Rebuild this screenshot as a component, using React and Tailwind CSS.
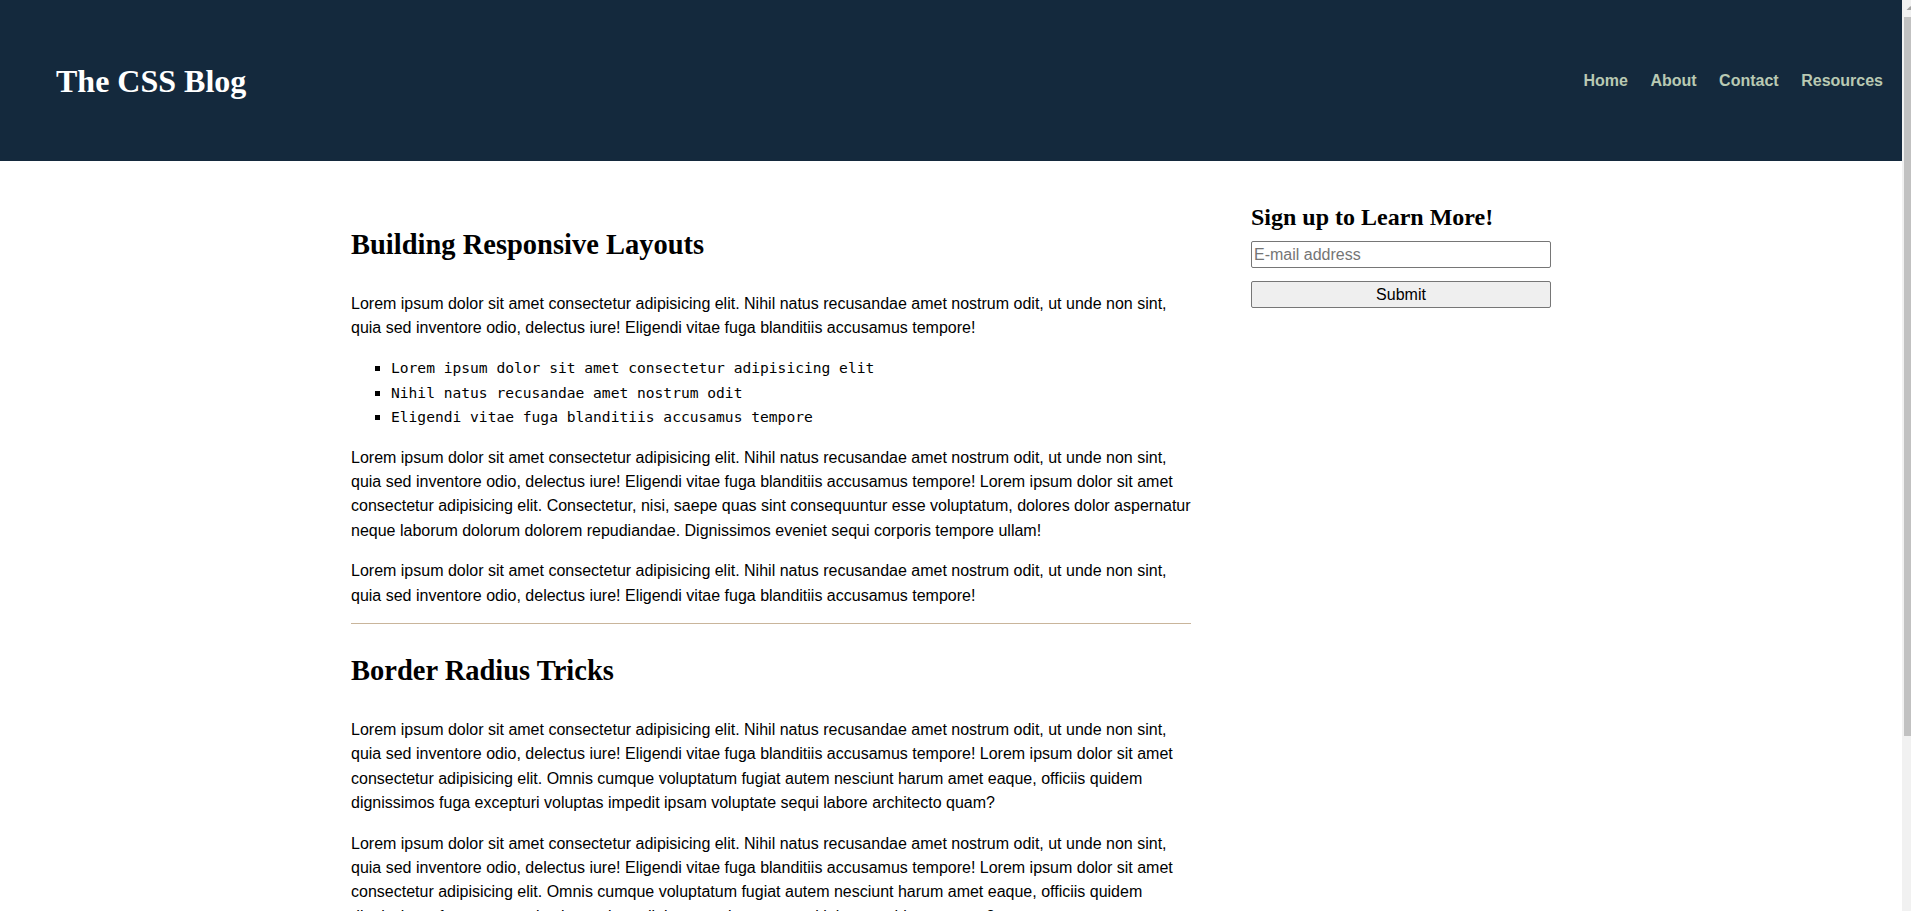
const navLinks = ["Home", "About", "Contact", "Resources"];

const lorem =
    "Lorem ipsum dolor sit amet consectetur adipisicing elit. Nihil natus recusandae amet nostrum odit, ut unde non sint, quia sed inventore odio, delectus iure! Eligendi vitae fuga blanditiis accusamus tempore!";

const listItems = [
    "Lorem ipsum dolor sit amet consectetur adipisicing elit",
    "Nihil natus recusandae amet nostrum odit",
    "Eligendi vitae fuga blanditiis accusamus tempore",
];

const Paragraph = ({ children }) => (
    <p className="my-[12.5px] pt-[3.5px] text-[16px] leading-[24.4px] text-black">{children}</p>
);

const PostTitle = ({ children }) => (
    <h2 className="mt-[31px] mb-[27px] font-['Liberation_Serif',serif] text-[28.5px] font-bold leading-[32px] text-black">
        {children}
    </h2>
);

const App = () => {
    return (
        <div className="flex h-[911px] overflow-hidden bg-white font-['Liberation_Sans',Arial,sans-serif]">
            <div className="flex-1 min-w-0">
                <header className="flex h-[161px] items-center justify-between bg-[#14293d] pl-[56px] pr-[19px]">
                    <h1 className="font-['Liberation_Serif',serif] text-[32px] font-bold text-white">
                        The CSS Blog
                    </h1>
                    <nav>
                        <ul className="flex gap-[22.5px]">
                            {navLinks.map((link) => (
                                <li key={link}>
                                    <a href="#" className="text-[16px] font-bold text-[#b9c9b3]">
                                        {link}
                                    </a>
                                </li>
                            ))}
                        </ul>
                    </nav>
                </header>

                <div className="mx-auto flex w-[1200px] justify-between">
                    <main className="w-[840px] pt-[37px]">
                        <article className="border-b border-[#c9b59b] pb-[3px]">
                            <PostTitle>Building Responsive Layouts</PostTitle>
                            <Paragraph>{lorem}</Paragraph>
                            <ul className="my-[12.5px] list-[square] pt-[3.5px] pl-10 font-['DejaVu_Sans_Mono',monospace] text-[14.6px] leading-[24.4px] text-black">
                                {listItems.map((item) => (
                                    <li key={item}>{item}</li>
                                ))}
                            </ul>
                            <Paragraph>
                                {lorem} Lorem ipsum dolor sit amet consectetur adipisicing elit.
                                Consectetur, nisi, saepe quas sint consequuntur esse voluptatum,
                                dolores dolor aspernatur neque laborum dolorum dolorem repudiandae.
                                Dignissimos eveniet sequi corporis tempore ullam!
                            </Paragraph>
                            <Paragraph>{lorem}</Paragraph>
                        </article>

                        <article className="pb-[3px]">
                            <PostTitle>Border Radius Tricks</PostTitle>
                            <Paragraph>
                                {lorem} Lorem ipsum dolor sit amet consectetur adipisicing elit.
                                Omnis cumque voluptatum fugiat autem nesciunt harum amet eaque,
                                officiis quidem dignissimos fuga excepturi voluptas impedit ipsam
                                voluptate sequi labore architecto quam?
                            </Paragraph>
                            <Paragraph>
                                {lorem} Lorem ipsum dolor sit amet consectetur adipisicing elit.
                                Omnis cumque voluptatum fugiat autem nesciunt harum amet eaque,
                                officiis quidem dignissimos fuga excepturi voluptas impedit ipsam
                                voluptate sequi labore architecto quam?
                            </Paragraph>
                        </article>
                    </main>

                    <aside className="w-[300px] pt-[43px]">
                        <h3 className="font-['Liberation_Serif',serif] text-[24px] font-bold leading-[27px] text-black">
                            Sign up to Learn More!
                        </h3>
                        <form onSubmit={(e) => e.preventDefault()}>
                            <input
                                type="email"
                                placeholder="E-mail address"
                                className="mt-[10px] block h-[27px] w-full rounded-[2px] border border-[#767676] px-[2px] text-[16px] text-black placeholder:text-[#757575]"
                            />
                            <button
                                type="submit"
                                className="mt-[13px] block h-[27px] w-full rounded-[2px] border border-[#767676] bg-[#efefef] text-[16px] text-black"
                            >
                                Submit
                            </button>
                        </form>
                    </aside>
                </div>
            </div>

            {/* scrollbar edge, cut off at the right of the window */}
            <div className="flex w-[9px] flex-col bg-[#f1f1f1]">
                <svg width="9" height="17" viewBox="0 0 9 17" className="shrink-0">
                    <polygon points="4.5,10 8.5,6 9,6.5 9,10" fill="#a3a3a3" />
                </svg>
                <div className="ml-[2px] h-[719px] bg-[#c1c1c1]" />
            </div>
        </div>
    );
};

export default App;
